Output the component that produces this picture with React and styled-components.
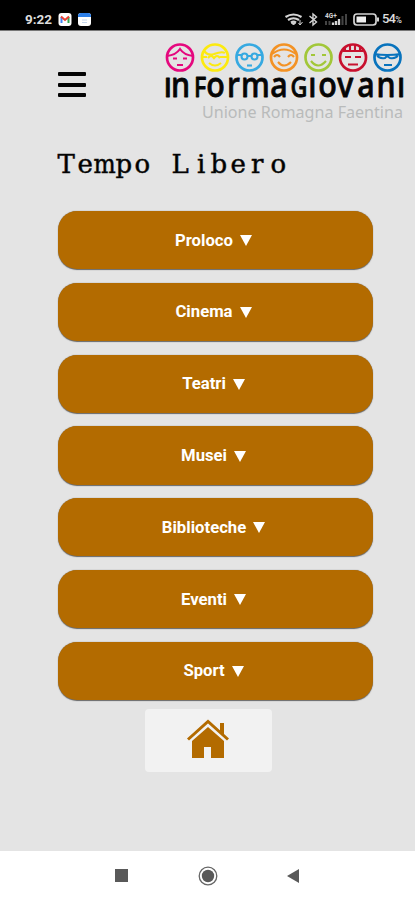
import React from "react";
import styled, { createGlobalStyle } from "styled-components";

const Global = createGlobalStyle`
  * { box-sizing: border-box; }
  body { margin: 0; background: #e4e4e4; font-family: Roboto, sans-serif; }
`;
const Screen = styled.div`
  width: 415px;
  height: 900px;
  display: flex;
  flex-direction: column;
  background: #e4e4e4;
  overflow: hidden;
`;
const StatusBar = styled.div`
  height: 31px;
  flex: none;
  background: #000;
  color: #ddd;
  display: flex;
  justify-content: space-between;
  padding: 8px 13px 0 25px;
  border-bottom: 1px solid #777;
`;
const StatusGroup = styled.div`
  display: flex;
  align-items: center;
  height: 23px;
`;
const Clock = styled.span`
  font: 700 13.500px/23px Roboto, sans-serif;
  width: 33px;
  white-space: nowrap;
`;
const Battery = styled.span`
  font: 500 13px/23px Roboto, sans-serif;
  letter-spacing: -0.8px;
  width: 20px;
  white-space: nowrap;
`;
const Percent = styled.span`
  font-size: 9px;
`;
const Header = styled.header`
  height: 104px;
  flex: none;
  display: flex;
  justify-content: space-between;
  padding: 8px 7px 0 58px;
`;
const MenuButton = styled.button`
  border: 0;
  padding: 0;
  margin-top: 33px;
  width: 28px;
  height: 25px;
  background: none;
  display: flex;
  flex-direction: column;
  justify-content: space-between;
`;
const MenuLine = styled.span`
  width: 28px;
  height: 4px;
  border-radius: 1px;
  background: #050505;
`;
const Logo = styled.svg`
  width: 245px;
  height: 90px;
  display: block;
  overflow: visible;
`;
const Title = styled.h1`
  margin: 11px 0 0 57px;
  height: 36px;
  font-size: 26px;
  font-weight: 400;
  color: #111;
`;
const TitleArt = styled.svg`
  display: block;
  width: 240px;
  height: 36px;
  overflow: visible;
`;
const List = styled.main`
  display: flex;
  flex-direction: column;
  gap: 13.5px;
  padding: 29px 42px 0 58px;
`;
const Item = styled.button`
  height: 58.3px;
  border: 0;
  border-radius: 19px;
  background: #b36b00;
  box-shadow: 0 0.5px 1px #666;
  color: #fff;
  font: 700 16.7px/58px Roboto, sans-serif;
  display: flex;
  justify-content: center;
  align-items: center;
  gap: 7px;
  padding: 1px 4px 0 0;
`;
const Arrow = styled.span`
  width: 0;
  height: 0;
  border: 6px solid transparent;
  border-top: 11px solid #fff;
  border-bottom: 0;
`;
const HomeButton = styled.button`
  margin: 9px 0 0 145px;
  width: 127px;
  height: 63px;
  flex: none;
  border: 0;
  border-radius: 4px;
  background: #f2f2f2;
  padding: 0 1px 3px 0;
  display: flex;
  justify-content: center;
  align-items: center;
`;
const NavBar = styled.nav`
  margin-top: auto;
  height: 49px;
  flex: none;
  background: #fff;
  display: flex;
  justify-content: space-between;
  align-items: center;
  padding: 0 115px;
`;

const faces = [
  { x: 180, c: "#e5087e", d: <><path d="M167 56q9-1 13-7q4 6 13 7" /><path d="M173 58.500h4M183 58.500h4M177 65h6" /></> },
  { x: 215, c: "#fcea10", d: <><path d="M204 51q4 5 10 3q8-3 11-1M202 57h5M208 58q3-4 6 0q3-4 6 0M220 57h7" /><path d="M209 63q6 5 12 0" /></> },
  { x: 249.500, c: "#36a9e1", d: <><path d="M237 55h4M248 56h3M258 55h4" /><circle cx="244.500" cy="56.500" r="3" /><circle cx="254.500" cy="56.500" r="3" /><path d="M247 65.500h5" /></> },
  { x: 284, c: "#f39224", d: <><path d="M272 54q12-9 24 0" /><path d="M274 57q3-4 6 0M288 57q3-4 6 0M278 62q6 7 13 0" /></> },
  { x: 318.500, c: "#a2c739", d: <><path d="M311 55h4M322 55h4M311 61q7 9 15 0" /></> },
  { x: 353, c: "#c8102e", d: <><path d="M343 51h20M345 51v-4M350 51v-6M355 51v-6M360 51v-4M345 57h6M355 57h6M348 64.500h10" /></> },
  { x: 387.500, c: "#0873bd", d: <><path d="M374 54q13 2 27 0M377 55q2 4 8 3l2-2l3 2q6 1 8-3M384 65h8" /></> },
];
const SQUEEZE = 0.88;
const glyphs = [
  ["ı", 163.7], ["n", 171], ["F", 194], ["o", 206.2], ["r", 227], ["m", 241],
  ["a", 270.3], ["G", 290.5], ["ı", 308.300], ["o", 318.3], ["v", 337.3], ["a", 357.3], ["n", 376.6], ["ı", 397],
];
const items = ["Proloco", "Cinema", "Teatri", "Musei", "Biblioteche", "Eventi", "Sport"];

export default function App() {
  return (
    <>
      <Global />
      <Screen>
        <StatusBar>
          <StatusGroup>
            <Clock>9:22</Clock>
            <svg width="34" height="15" viewBox="0 0 34 15">
              <rect x="0.500" y="1" width="13" height="13" rx="3" fill="#fff" />
              <path d="M3.500 11V5" stroke="#4285f4" strokeWidth="2" />
              <path d="M10.500 11V5" stroke="#34a853" strokeWidth="2" />
              <path d="M3 4.500l4 3.500l4-3.500" stroke="#ea4335" strokeWidth="2" fill="none" />
              <rect x="20" y="1" width="13" height="13" rx="3" fill="#fff" />
              <path d="M20 5V4q0-3 3-3h7q3 0 3 3v1z" fill="#2d7fe8" />
              <path d="M24 8h5M24 10.500h5" stroke="#c6d7ee" />
            </svg>
          </StatusGroup>
          <StatusGroup>
            <svg width="98" height="17" viewBox="283 11 98 17" fill="none" stroke="#d4d4d4">
              <path d="M284.500 17q8-5 16 0M287 20q5.500-3.500 11 0M290 22.700q2.500-2 5 0" strokeWidth="2.200" />
              <path d="M292.500 25l-2-2h4z" fill="#d4d4d4" />
              <path d="M299 20v5m0 0l-1.500-2m1.500 2l2.500-3" />
              <path d="M308.500 16l7 6-3.500 3V14l3.500 3-7 6" strokeWidth="1.400" />
              <text x="324" y="17.500" fontSize="6.500" fontWeight="700" fontFamily="Roboto" fill="#d4d4d4" stroke="none">4G+</text>
              <path d="M325 25v-4M328.500 25v-4" stroke="#444" strokeWidth="2" />
              <path d="M332 25v-2.500M335 25v-4M338 25v-6" strokeWidth="2.300" />
              <path d="M341.500 25v-9M345 25V14" stroke="#444" strokeWidth="2" />
              <rect x="353" y="14" width="22" height="11" rx="3" strokeWidth="1.700" />
              <rect x="355.500" y="16.500" width="9.500" height="6" fill="#eee" stroke="none" />
              <path d="M377 17.500v4" strokeWidth="2" />
            </svg>
            <Battery>54<Percent>%</Percent></Battery>
          </StatusGroup>
        </StatusBar>
        <Header>
          <MenuButton aria-label="Menu"><MenuLine /><MenuLine /><MenuLine /></MenuButton>
          <Logo viewBox="163 39 245 90">
            {faces.map((f) => (
              <g key={f.x} fill="none" stroke={f.c} strokeWidth="2.100">
                <circle cx={f.x} cy="57.500" r="13" strokeWidth="2.700" />
                {f.d}
              </g>
            ))}
            <text y="96.700" transform={`scale(${SQUEEZE} 1)`} fontFamily="Noto Sans, sans-serif" fontWeight="500" fill="#050505" stroke="#050505" strokeWidth="0.800" strokeLinejoin="round">
              {glyphs.map(([g, x], i) => (
                <tspan key={i} x={x / SQUEEZE} fontSize={g === "F" || g === "G" ? 26.500 : 34.500}>{g}</tspan>
              ))}
            </text>
            <text x="202" y="118" fontFamily="Noto Sans, sans-serif" fontWeight="400" fontSize="16.500" fill="#b9bbbb" textLength="201" lengthAdjust="spacingAndGlyphs">Unione Romagna Faentina</text>
          </Logo>
        </Header>
        <Title>
          <TitleArt viewBox="57 146 240 36">
            <text y="173" fontSize="26" fontFamily="DejaVu Serif, serif" stroke="#111" strokeWidth="0.500">
              <tspan x="57.500 77.500">Te</tspan>
              <tspan x="93.500" fontFamily="DejaVu Serif Condensed, DejaVu Serif, serif" fontStretch="condensed">m</tspan>
              <tspan x="115.500 134.500 152 171.500 197 210.500 230.500 251 270.500">po Libero</tspan>
            </text>
          </TitleArt>
        </Title>
        <List>
          {items.map((t) => <Item key={t}>{t}<Arrow /></Item>)}
        </List>
        <HomeButton aria-label="Home">
          <svg width="44" height="42" viewBox="0 0 44 42">
            <path d="M34 5h4v12l-4-4z" fill="#b36b00" />
            <path d="M2 21.500L22 3.500l20 18" fill="none" stroke="#b36b00" strokeWidth="3" />
            <path d="M6 23L22 9l16 14v17H25V29h-7v11H6z" fill="#b36b00" />
          </svg>
        </HomeButton>
        <NavBar>
          <svg width="13" height="13"><rect width="13" height="13" fill="#595959" /></svg>
          <svg width="20" height="20" viewBox="0 0 20 20">
            <circle cx="10" cy="10" r="8.800" fill="none" stroke="#666" strokeWidth="1.300" />
            <circle cx="10" cy="10" r="6.200" fill="#595959" />
          </svg>
          <svg width="13" height="14"><path d="M0 7L12 0v14z" fill="#595959" /></svg>
        </NavBar>
      </Screen>
    </>
  );
}
